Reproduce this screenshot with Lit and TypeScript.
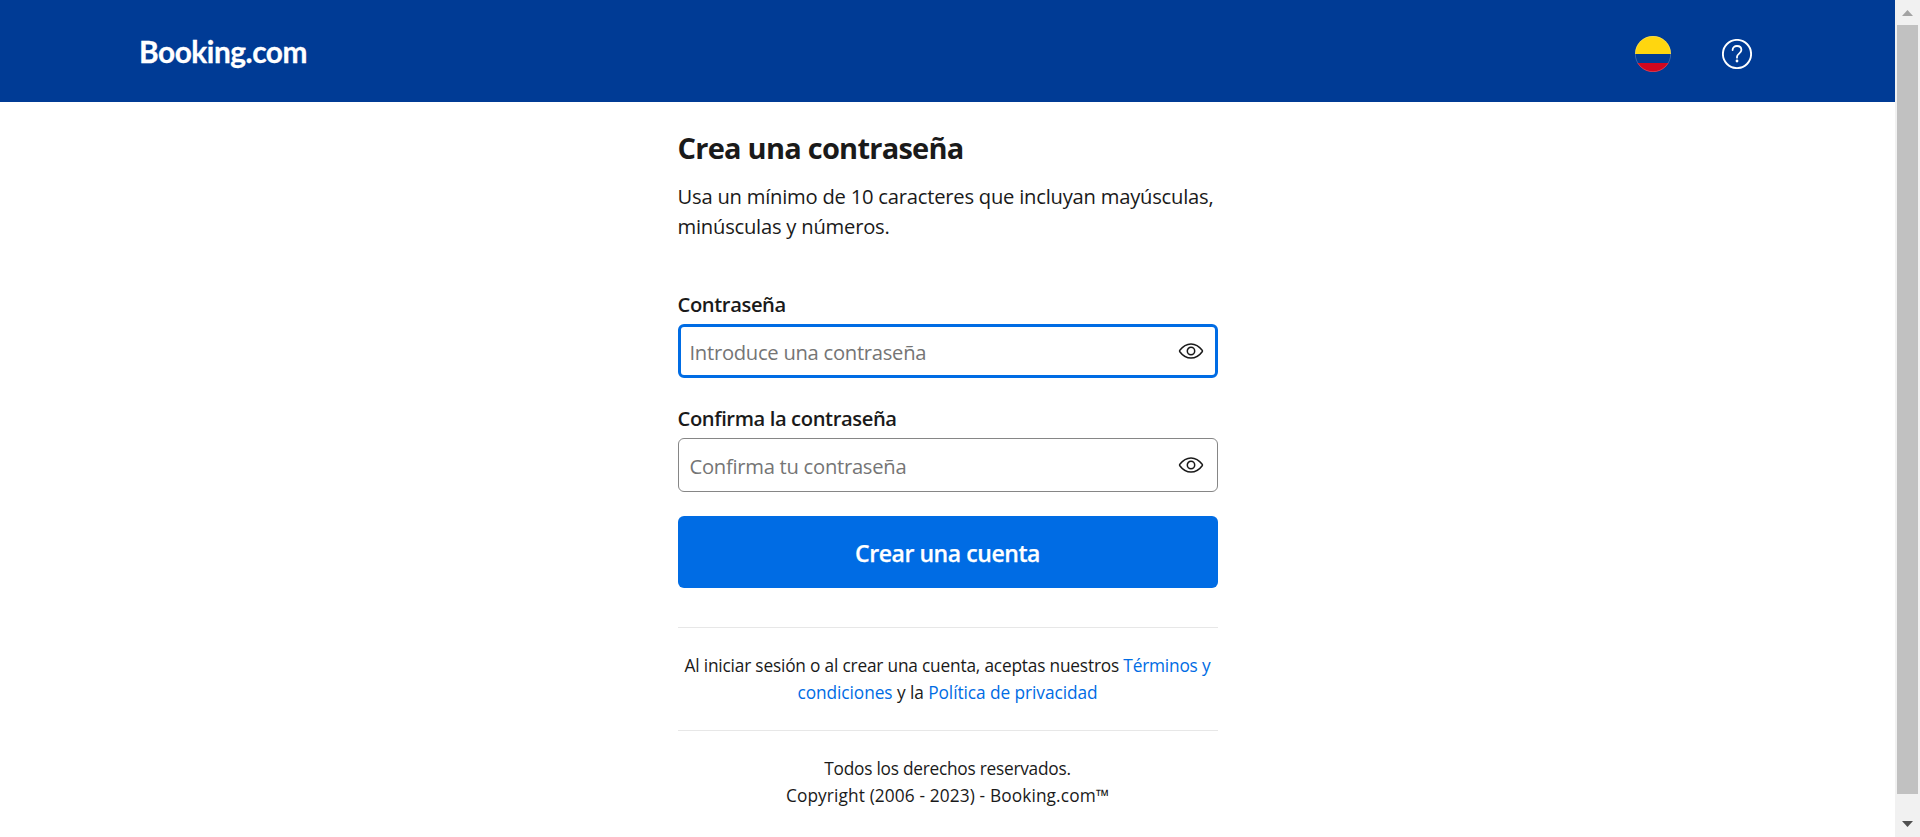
import { LitElement, html, css } from "lit";
import { customElement, property } from "lit/decorators.js";

@customElement("password-field")
export class PasswordField extends LitElement {
  static styles = css`
    :host { display: block; }
    .label { display: block; height: 30px; line-height: 30px; margin-bottom: 5px; font-size: 20.2px; font-weight: 600; letter-spacing: -0.4px; color: #1a1a1a; white-space: nowrap; }
    .box { display: flex; align-items: center; box-sizing: border-box; height: 54px; padding: 0 13px 0 11px; border: 1px solid #868686; border-radius: 6px; background: #fff; }
    .box.active { border: 3px solid #006ce4; padding: 0 11px 0 9px; }
    .input { flex: 1; min-width: 0; height: 48px; box-sizing: border-box; padding: 2px 0 0; border: 0; outline: 0; background: none; font: 400 20.2px "Open Sans", "Noto Sans", sans-serif; letter-spacing: -0.27px; color: #1a1a1a; }
    .input::placeholder { color: #757575; opacity: 1; }
    .eye { display: block; width: 26px; height: 18px; }
  `;
  @property() label = "";
  @property() hint = "";
  @property({ type: Boolean }) active = false;
  render() {
    return html`
      <label class="label" for="pw">${this.label}</label>
      <div class="box ${this.active ? "active" : ""}">
        <input id="pw" class="input" type="text" placeholder=${this.hint} />
        <svg class="eye" viewBox="0 0 26 18" fill="none" stroke="#1a1a1a" stroke-width="1.5">
          <path d="M1.8 9.7Q1.2 9 1.8 8.3C5 4 8.8 1.9 13 1.9S21 4 24.2 8.3Q24.8 9 24.2 9.7C21 14 17.2 16.1 13 16.1S5 14 1.8 9.7Z" />
          <circle cx="13" cy="9" r="3.7" />
        </svg>
      </div>
    `;
  }
}

@customElement("app-root")
export class AppRoot extends LitElement {
  static styles = css`
    :host { display: flex; height: 837px; overflow: hidden; background: #fff; color: #1a1a1a; font-family: "Open Sans", "Noto Sans", sans-serif; }
    .page { flex: 1; display: flex; flex-direction: column; align-items: center; }
    .header { align-self: stretch; height: 102px; box-sizing: border-box; padding: 2px 143px 0 139px; display: flex; align-items: center; background: #003b95; }
    .logo { margin-right: auto; padding-bottom: 1px; color: #fff; font: 700 29.8px/40px Lato, sans-serif; letter-spacing: -0.45px; -webkit-text-stroke: 0.3px #fff; white-space: nowrap; }
    .flag { width: 36px; height: 36px; margin: 4px 51px 0 0; }
    .help { width: 30px; height: 30px; margin-top: 4px; }
    .flag, .help { display: block; }
    .content { width: 540px; padding-top: 28px; display: flex; flex-direction: column; }
    .title { margin: 0; font-size: 29px; line-height: 36px; font-weight: 700; letter-spacing: -0.75px; white-space: nowrap; }
    .lead { margin: 14.5px 0 48.5px; font-size: 20.2px; line-height: 30px; letter-spacing: -0.23px; white-space: nowrap; }
    .second { margin-top: 25px; }
    .submit { height: 72px; margin-top: 24px; padding: 2px 0 0; border: 0; border-radius: 6px; background: #006ce4; color: #fff; font: 600 23px "Open Sans", "Noto Sans", sans-serif; letter-spacing: -0.43px; -webkit-text-stroke: 0.25px #fff; }
    .note { border-top: 1px solid #e7e7e7; text-align: center; font-size: 17.3px; line-height: 27px; white-space: nowrap; }
    .terms { margin-top: 39px; padding: 24px 0; letter-spacing: -0.19px; }
    .wide { letter-spacing: -0.07px; }
    .rights { padding-top: 24px; letter-spacing: -0.25px; }
    .copy { letter-spacing: 0.12px; }
    .link { color: #006ce4; text-decoration: none; }
    .bar { width: 25px; background: #f1f1f1; display: flex; flex-direction: column; align-items: center; }
    .cap { display: block; width: 25px; height: 25px; }
    .thumb { width: 21px; height: 769px; background: #c1c1c1; }
    .gap { flex: 1; }
  `;
  render() {
    return html`
      <div class="page">
        <header class="header">
          <div class="logo">Booking.com</div>
          <svg class="flag" viewBox="0 0 36 36">
            <defs><clipPath id="disc"><circle cx="18" cy="18" r="18" /></clipPath></defs>
            <g clip-path="url(#disc)">
              <path fill="#ffd60f" d="M0 0h36v18H0z" />
              <path fill="#003b95" d="M0 18h36v9H0z" />
              <path fill="#d0061f" d="M0 27h36v9H0z" />
            </g>
            <circle cx="18" cy="18" r="17.7" fill="none" stroke="#fff" stroke-opacity=".3" stroke-width=".7" />
          </svg>
          <svg class="help" viewBox="0 0 30 30" fill="none" stroke="#fff">
            <circle cx="15" cy="15" r="14.1" stroke-width="1.9" />
            <path d="M10.6 11.1C10.6 8.5 12.4 7 15 7s4.4 1.6 4.4 4.1c0 3.2-4.4 3.8-4.4 6.6v1" stroke-width="1.8" stroke-linecap="round" />
            <circle cx="15" cy="22" r="1.4" fill="#fff" stroke="none" />
          </svg>
        </header>
        <main class="content">
          <h1 class="title">Crea una contraseña</h1>
          <p class="lead">Usa un mínimo de 10 caracteres que incluyan mayúsculas,<br />minúsculas y números.</p>
          <password-field active label="Contraseña" hint="Introduce una contraseña"></password-field>
          <password-field class="second" label="Confirma la contraseña" hint="Confirma tu contraseña"></password-field>
          <button class="submit">Crear una cuenta</button>
          <div class="note terms">
            Al iniciar sesión o al crear una cuenta, aceptas nuestros <a class="link">Términos y</a><br />
            <span class="wide"><a class="link">condiciones</a> y la <a class="link">Política de privacidad</a></span>
          </div>
          <div class="note rights">
            Todos los derechos reservados.<br />
            <span class="copy">Copyright (2006 - 2023) - Booking.com™</span>
          </div>
        </main>
      </div>
      <div class="bar">
        <svg class="cap" viewBox="0 0 25 25"><path d="M12.5 10L18 16H7z" fill="#a3a3a3" /></svg>
        <div class="thumb"></div>
        <div class="gap"></div>
        <svg class="cap" viewBox="0 0 25 25"><path d="M12.5 15L18 9H7z" fill="#505050" /></svg>
      </div>
    `;
  }
}
